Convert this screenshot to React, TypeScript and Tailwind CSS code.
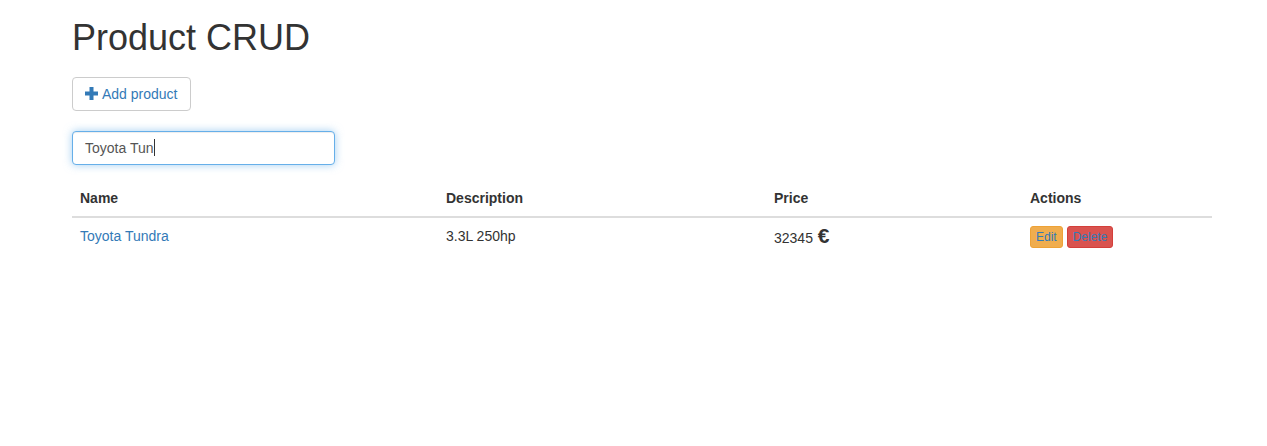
import React from "react";

const font = { fontFamily: '"Liberation Sans", Arial, Helvetica, sans-serif' };

export default function App() {
  return (
    <div className="min-h-[446px] bg-white text-[#333] text-[14px] leading-[20px]" style={font}>
      <div className="ml-[72px] w-[1140px]">
        <h1 className="pt-[18px] text-[36px] leading-[39.6px] font-normal text-[#333]">Product CRUD</h1>
        <div className="mt-[19px]">
          <button className="flex items-center h-[34px] px-[12px] border border-[#ccc] rounded-[4px] bg-white text-[#337ab7] text-[14px] leading-[20px]">
            <svg width="13" height="13" viewBox="0 0 13 13" className="mr-[4px]" fill="#337ab7">
              <rect x="4.5" y="0" width="4" height="13" />
              <rect x="0" y="4.5" width="13" height="4" />
            </svg>
            Add product
          </button>
        </div>
        <div className="mt-[20px] w-[263px] h-[34px] px-[12px] flex items-center border border-[#66afe9] rounded-[4px] bg-white text-[#555] shadow-[inset_0_1px_1px_rgba(0,0,0,0.075),0_0_8px_rgba(102,175,233,0.6)]">
          <span>Toyota Tun</span>
          <span className="inline-block w-[1px] h-[17px] bg-[#333]"></span>
        </div>
        <table className="mt-[15px] w-[1140px] border-collapse table-fixed">
          <colgroup>
            <col className="w-[366px]" />
            <col className="w-[328px]" />
            <col className="w-[256px]" />
            <col className="w-[190px]" />
          </colgroup>
          <thead>
            <tr>
              <th className="text-left font-bold p-[8px] border-b-2 border-[#ddd]">Name</th>
              <th className="text-left font-bold p-[8px] border-b-2 border-[#ddd]">Description</th>
              <th className="text-left font-bold p-[8px] border-b-2 border-[#ddd]">Price</th>
              <th className="text-left font-bold p-[8px] border-b-2 border-[#ddd]">Actions</th>
            </tr>
          </thead>
          <tbody>
            <tr>
              <td className="p-[8px] align-top">
                <a className="text-[#337ab7]">Toyota Tundra</a>
              </td>
              <td className="p-[8px] align-top">3.3L 250hp</td>
              <td className="p-[8px] align-top">
                32345 <span className="ml-[1px] text-[21px] font-bold leading-[20px]">€</span>
              </td>
              <td className="p-[8px] align-top">
                <div className="flex gap-[4px]">
                  <button className="h-[22px] px-[5px] text-[12px] leading-[18px] rounded-[3px] border border-[#eea236] bg-[#f0ad4e] text-[#337ab7]">Edit</button>
                  <button className="h-[22px] px-[5px] text-[12px] leading-[18px] rounded-[3px] border border-[#d43f3a] bg-[#d9534f] text-[#337ab7]">Delete</button>
                </div>
              </td>
            </tr>
          </tbody>
        </table>
      </div>
    </div>
  );
}
